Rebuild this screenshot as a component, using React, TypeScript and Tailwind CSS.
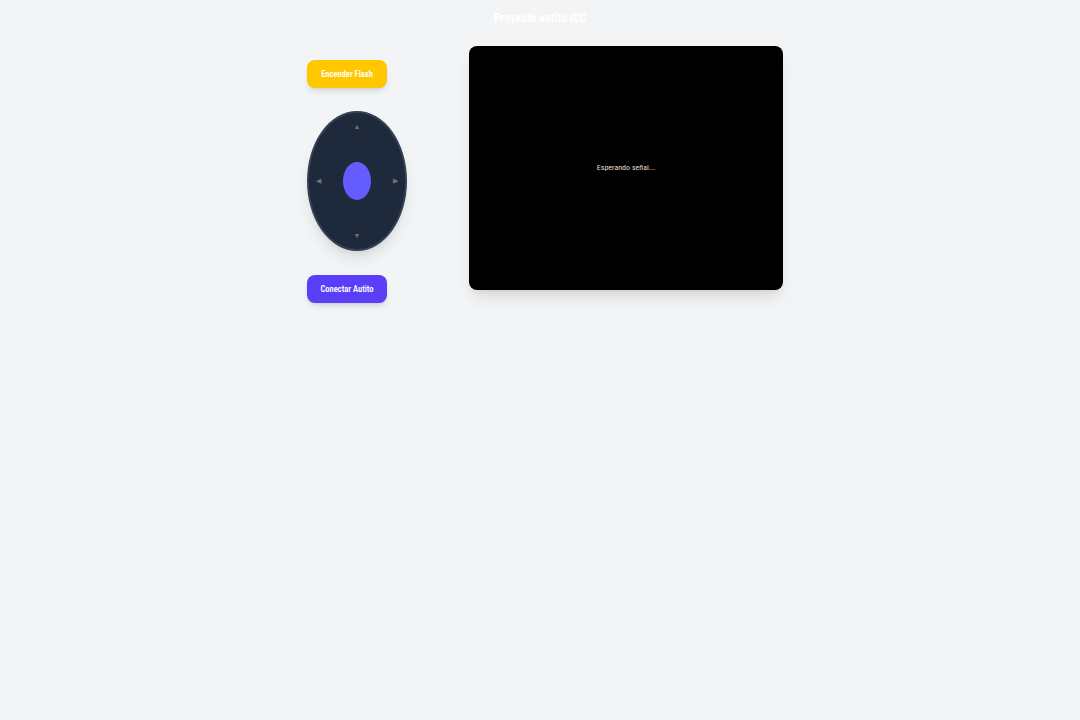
export default function App() {
  return (
    <div
      className="min-h-screen bg-[#f3f4f6]"
      style={{ fontFamily: '"Roboto Condensed", "Open Sans", sans-serif' }}
    >
      <h1 className="pt-[8px] text-center text-[12px] font-bold leading-[20px] text-white">
        Proyecto autito ICC
      </h1>

      <div className="mt-[18px] flex justify-center gap-[62px] pl-[10px]">
        {/* Controles */}
        <div className="flex w-[100px] flex-col items-start pt-[14px]">
          <button className="h-[28px] w-[80px] rounded-[8px] bg-[#ffc700] text-[8.5px] font-semibold text-white shadow-md">
            Encender Flash
          </button>

          <div className="relative mt-[23px] h-[140px] w-[100px] rounded-[50%] border-2 border-[#334155] bg-[#1e293b] shadow-lg">
            <span className="absolute left-1/2 top-[11px] -translate-x-1/2 text-[7px] leading-none text-[#6b7280]">▲</span>
            <span className="absolute bottom-[9px] left-1/2 -translate-x-1/2 text-[7px] leading-none text-[#6b7280]">▼</span>
            <span className="absolute left-[7px] top-1/2 -translate-y-1/2 text-[7px] leading-none text-[#6b7280]">◀</span>
            <span className="absolute right-[7px] top-1/2 -translate-y-1/2 text-[7px] leading-none text-[#6b7280]">▶</span>
            <div className="absolute left-1/2 top-1/2 h-[38px] w-[28px] -translate-x-1/2 -translate-y-1/2 rounded-[50%] bg-[#645cff]" />
          </div>

          <button className="mt-[24px] h-[28px] w-[80px] rounded-[8px] bg-[#5a3ef8] text-[8.5px] font-semibold text-white shadow-md">
            Conectar Autito
          </button>
        </div>

        {/* Video */}
        <div className="flex h-[244px] w-[314px] items-center justify-center rounded-[8px] bg-black shadow-lg">
          <span className="text-[8px] text-[#e5dccf]">Esperando señal...</span>
        </div>
      </div>
    </div>
  );
}
